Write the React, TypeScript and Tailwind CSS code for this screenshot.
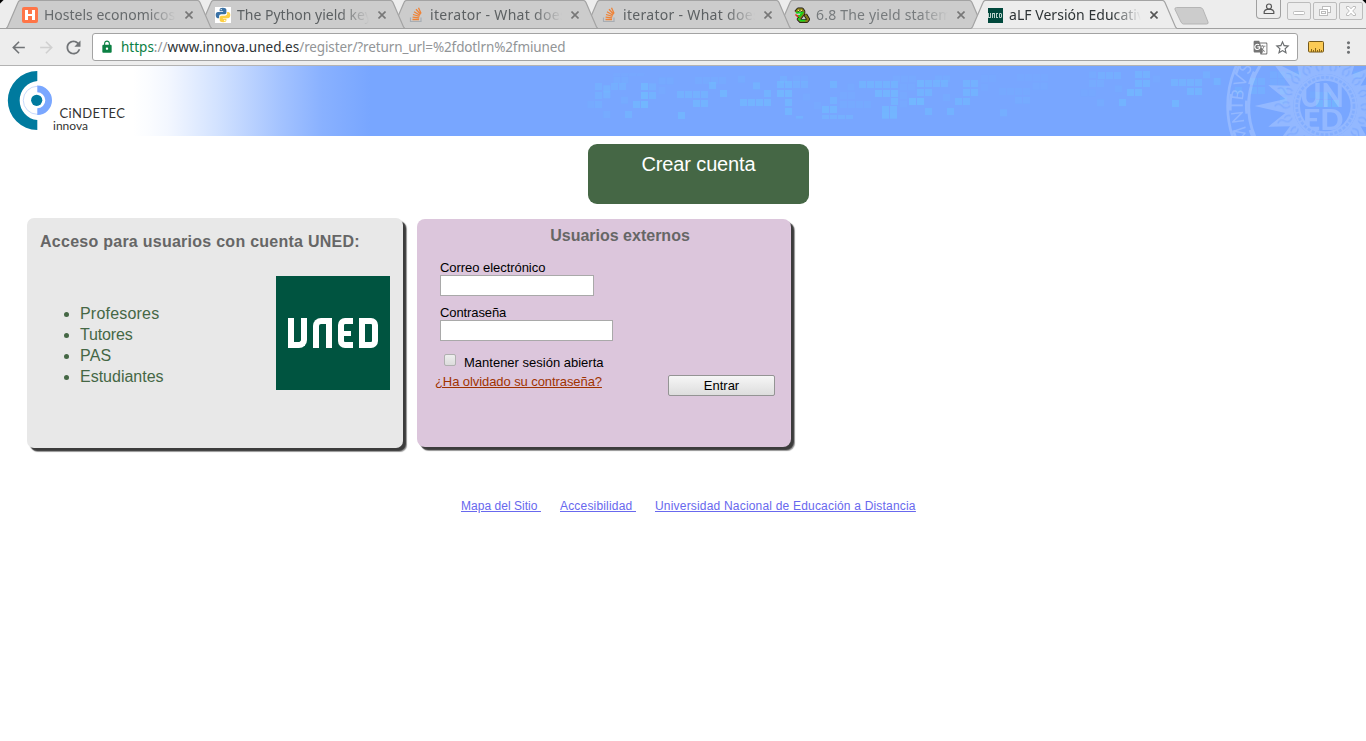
import type { ReactNode } from "react";
import { MdArrowBack, MdArrowForward, MdRefresh, MdLock, MdStarBorder, MdGTranslate, MdMoreVert } from "react-icons/md";

function HostelIcon() {
  return (
    <svg width="16" height="16" viewBox="0 0 16 16">
      <rect width="16" height="16" rx="2" fill="#ff7547" />
      <path d="M3 3h3v4h4V3h3v10h-3V9H6v4H3z" fill="#fff" />
    </svg>
  );
}

function PythonIcon() {
  return (
    <svg width="16" height="16" viewBox="0 0 16 16">
      <rect width="16" height="16" fill="#fff" />
      <path d="M7.8 .8C5.600 .8 4.600 1.500 4.600 2.800v1.500h3.500v.6H3C1.500 4.900 .7 6 .7 8s.9 3.200 2.100 3.200h1.300V9.500c0-1.300 1-2.200 2.200-2.200h3.400c1 0 1.700-.7 1.700-1.700V2.800C11.400 1.500 10 .8 7.800 .8z" fill="#3a72a5" />
      <path d="M8.200 15.300c2.200 0 3.200-.8 3.200-2v-1.500H7.900v-.6H13c1.500 0 2.300-1.100 2.300-3.100S14.400 4.900 13.200 4.900h-1.100v1.700c0 1.300-1 2.200-2.200 2.200H6.500c-1 0-1.800.7-1.800 1.700v2.800c0 1.200 1.300 2 3.500 2z" fill="#fdd045" />
      <circle cx="6.200" cy="2.600" r=".7" fill="#fff" />
      <circle cx="9.800" cy="13.500" r=".7" fill="#fff" />
    </svg>
  );
}

function StackIcon() {
  return (
    <svg width="16" height="16" viewBox="0 0 16 16" fill="none">
      <path d="M2.500 10.500v4h10.500v-4" stroke="#a8adb3" strokeWidth="1.200" />
      <path d="M4.500 12.500h6.500M4.600 10.200l6.600.6M5 7.500l6.500 1.900M6 4.700l6 3.500M8 2.200l4.600 5M10.500 .8l2.600 5.600" stroke="#ef8236" strokeWidth="1.300" />
    </svg>
  );
}

function SnakeIcon() {
  return (
    <svg width="17" height="17" viewBox="0 0 17 17" fill="none">
      <path d="M2 5l2.500-3h4L10 4v2.500L7.500 9.500 5 12.500l2 2h6.500L15 12.500 12 7.500" stroke="#111" strokeWidth="4" strokeLinejoin="round" />
      <path d="M2 5l2.500-3h4L10 4v2.500L7.500 9.500 5 12.500l2 2h6.500L15 12.500 12 7.500" stroke="#857b1c" strokeWidth="2.400" />
      <path d="M2 5.500h7L6.500 9H3M4.500 11.500L7 14h5" stroke="#19d419" strokeWidth="2" />
      <path d="M1.500 7.500l3 2.500" stroke="#e12b1c" strokeWidth="1.500" />
      <path d="M4 3h1.500M7 3h1.500" stroke="#fff36b" strokeWidth="1.200" />
    </svg>
  );
}

function UnedIcon() {
  return (
    <span className="flex h-[15px] w-[15px] items-center justify-center gap-px bg-[#00483c]">
      <i className="h-[5px] w-[3px] rounded-br-[1px] border border-t-0 border-[#b9d0ca]" />
      <i className="h-[5px] w-[3px] rounded-tl-[1px] border border-b-0 border-[#b9d0ca]" />
      <i className="h-[5px] w-[2px] border border-r-0 border-[#b9d0ca]" />
      <i className="h-[5px] w-[3px] rounded-r-[1px] border border-[#b9d0ca]" />
    </span>
  );
}

type TabProps = { icon: ReactNode; title: string; layer: string; spacing: string; tone: string; active?: boolean };

function Tab({ icon, title, layer, spacing, tone, active }: TabProps) {
  return (
    <div className={`relative -mr-[13px] h-[29px] w-[206px] shrink-0 ${layer}`}>
      <svg className="absolute inset-0" width="206" height="29" viewBox="0 0 206 29">
        <path
          d="M0 28.500L1.500 27 12 2.500Q12.800 .5 14.500 .5H191.500Q193 .5 194 2.500L204.500 27 206 28.500"
          fill={active ? "#ededed" : "#cccccc"}
          stroke="#a3a3a3"
          strokeWidth="1.200"
        />
        {!active && <path d="M0 28.500H206" stroke="#a0a0a0" />}
      </svg>
      <div className="relative flex h-[29px] items-center pt-[1px] pl-[16px]">
        <span className="flex w-4 justify-center">{icon}</span>
        <span className={`ml-[6px] w-[132px] overflow-hidden text-[14px] leading-5 whitespace-nowrap [mask-image:linear-gradient(to_right,#000_78%,transparent_100%)] ${spacing} ${tone}`}>
          {title}
        </span>
        <svg className="ml-[9px]" width="8" height="8" viewBox="0 0 8 8">
          <path d="M.5 .5l7 7M7.500 .5l-7 7" stroke={active ? "#555" : "#777"} strokeWidth="1.600" />
        </svg>
      </div>
    </div>
  );
}

function BrowserChrome() {
  return (
    <header className="h-[66px] border-b border-[#b3b3b3] bg-[#ededed] font-['Noto_Sans',sans-serif]">
      <div className="flex h-[29px] border-b border-[#a0a0a0] bg-[linear-gradient(135deg,#000_2px,transparent_3px),linear-gradient(225deg,#000_2px,transparent_3px)] pl-[6px]">
        <Tab icon={<HostelIcon />} title="Hostels economicos" layer="z-[5]" spacing="tracking-[0px]" tone="text-[#666a6c]" />
        <Tab icon={<PythonIcon />} title="The Python yield keyword" layer="z-[4]" spacing="tracking-[0px]" tone="text-[#5d6163]" />
        <Tab icon={<StackIcon />} title="iterator - What does" layer="z-[3]" spacing="tracking-[0.300px]" tone="text-[#5d6163]" />
        <Tab icon={<StackIcon />} title="iterator - What does" layer="z-[2]" spacing="tracking-[0.300px]" tone="text-[#5d6163]" />
        <Tab icon={<SnakeIcon />} title="6.8 The yield statement" layer="z-[1]" spacing="tracking-[0.200px]" tone="text-[#777b7d]" />
        <Tab icon={<UnedIcon />} title="aLF Versión Educativa" layer="z-[6]" spacing="tracking-[0.040px]" tone="text-[#2e3436]" active />
        <svg className="mt-[7px] ml-[10px]" width="36" height="18" viewBox="0 0 36 18">
          <path d="M2.500 .5H26q2 0 3 2l5 12.500q.7 2-1.500 2H9.500q-1.500 0-2.500-2L1 2.500Q.5 .5 2.500 .5z" fill="#cccccc" stroke="#b5b5b5" />
        </svg>
        <div className="ml-auto flex">
          <div className="flex h-[19px] w-[25px] items-center justify-center rounded-b-[4px] border border-t-0 border-[#a0a0a0]">
            <svg width="12" height="12" viewBox="0 0 12 12" fill="none" stroke="#555" strokeWidth="1.200">
              <circle cx="6" cy="3.500" r="2.500" />
              <path d="M1.200 10.500V8.600Q2 6.800 4 6.400h4q2 .4 2.800 2.200v1.900z" />
            </svg>
          </div>
          <div className="mt-[2px] ml-[6px] flex gap-[2px] pr-[3px]">
            <svg width="24" height="18" viewBox="0 0 24 18" fill="none" stroke="#bcbcbc">
              <rect x=".5" y=".5" width="23" height="17" rx="1.500" />
              <rect x="6.500" y="9.500" width="11" height="3" rx="1" fill="#fff" />
            </svg>
            <svg width="24" height="18" viewBox="0 0 24 18" fill="none" stroke="#bcbcbc">
              <rect x=".5" y=".5" width="23" height="17" rx="1.500" />
              <rect x="9.500" y="4.500" width="8" height="6" fill="#fff" />
              <rect x="6.500" y="7.500" width="8" height="6" fill="#fff" />
              <rect x="8.500" y="9.500" width="4" height="2" />
            </svg>
            <svg width="24" height="18" viewBox="0 0 24 18" fill="none" stroke="#bcbcbc">
              <rect x=".5" y=".5" width="23" height="17" rx="1.500" />
              <path d="M7.500 4.500h2.500l2 2.300 2-2.300h2.500v1.500L13.700 9l2.800 3v1.500H14l-2-2.300-2 2.300H7.500V12l2.800-3-2.800-3z" fill="#fff" />
            </svg>
          </div>
        </div>
      </div>
      <div className="flex h-[36px] items-center pl-[9px] text-[#5f6264]">
        <MdArrowBack size={19} className="text-[#717477]" />
        <MdArrowForward size={19} className="ml-[9px] text-[#d0d0d0]" />
        <MdRefresh size={21} className="ml-[7px] text-[#717477]" />
        <div className="ml-[8px] flex h-[28px] w-[1206px] items-center rounded-[3px] border border-[#a3a3a3] bg-white pr-[6px] pl-[7px]">
          <MdLock size={14} className="text-[#0b8043]" />
          <p className="ml-[7px] text-[13.500px] leading-5 whitespace-nowrap text-[#929597]">
            <span className="text-[#0b8043]">https</span>
            <span>://</span>
            <span className="tracking-[0.020px] text-[#2e3436]">www.innova.uned.es</span>
            <span className="tracking-[-0.120px]">/register/?return_url=%2fdotlrn%2fmiuned</span>
          </p>
          <MdGTranslate size={15} className="ml-auto text-[#757575]" />
          <MdStarBorder size={17} className="ml-[6px] text-[#6b6e70]" />
        </div>
        <svg className="ml-[10px]" width="16" height="14" viewBox="0 0 16 14">
          <rect x=".5" y="1.500" width="15" height="10.500" rx="1" fill="#fccb55" stroke="#75591a" />
          <path d="M3.500 12V9M5.500 12v-2M7.500 12V8M9.500 12v-2M11.500 12V9M13.500 12v-2" stroke="#8a6618" />
        </svg>
        <MdMoreVert size={19} className="ml-[15px] text-[#6f7274]" />
      </div>
    </header>
  );
}

// Mosaic tiles as [x, y, opacity, tile count to the right], in thirds of a pixel.
const tiles: number[][] = [
  [160, 34, 0.12, 4], [160, 44, 0.18, 2], [105, 63, 0.35, 1], [130, 70, 0.45, 1], [153, 63, 0.4, 2], [243, 63, 0.7, 1], [267, 64, 0.4, 1],
  [105, 90, 0.35, 1], [130, 88, 0.45, 1], [243, 90, 0.8, 1], [267, 90, 0.55, 1], [82, 117, 0.18, 1], [105, 117, 0.3, 1], [183, 104, 0.25, 1],
  [219, 117, 0.6, 1], [243, 117, 0.8, 1], [130, 147, 0.25, 1], [195, 147, 0.5, 1], [296, 46, 0.18, 2], [296, 75, 0.15, 1],
  [351, 87, 0.5, 4], [399, 114, 0.6, 2], [354, 150, 0.65, 1], [405, 45, 0.18, 4], [447, 60, 0.6, 1], [480, 84, 0.65, 1], [534, 41, 0.25, 1],
  [579, 61, 0.5, 1], [612, 84, 0.55, 1], [540, 111, 0.65, 4], [651, 57, 0.6, 2], [651, 84, 0.7, 2], [699, 57, 0.35, 2], [660, 42, 0.3, 1],
  [699, 41, 0.15, 2], [675, 111, 0.65, 1], [675, 138, 0.65, 1], [729, 95, 0.15, 1], [762, 120, 0.15, 1], [810, 57, 0.55, 1], [863, 64, 0.15, 1],
  [810, 105, 0.5, 1], [786, 132, 0.65, 2], [840, 90, 0.14, 2], [840, 117, 0.2, 4], [897, 57, 0.55, 5], [945, 84, 0.65, 3], [993, 108, 0.6, 1],
  [966, 132, 0.65, 2], [966, 152, 0.7, 2], [999, 40, 0.15, 3], [1020, 64, 0.15, 2], [1020, 90, 0.15, 1], [1020, 115, 0.15, 1],
  [1071, 54, 0.65, 1], [1095, 54, 0.5, 3], [1071, 81, 0.55, 2], [1047, 108, 0.8, 2], [1095, 138, 0.55, 1], [1161, 138, 0.55, 1], [1125, 40, 0.2, 2],
  [1149, 96, 0.2, 1], [1185, 108, 0.55, 2], [1209, 54, 0.5, 2], [1209, 81, 0.55, 2], [1263, 38, 0.12, 2], [1263, 65, 0.12, 1], [1320, 142, 0.4, 1],
  [1317, 78, 0.16, 4], [1365, 104, 0.25, 2], [1371, 36, 0.12, 4], [1418, 62, 0.14, 2], [1562, 82, 0.13, 2], [1587, 28, 0.2, 1],
  [1614, 30, 0.4, 3], [1587, 54, 0.25, 2], [1611, 112, 0.25, 1], [1665, 70, 0.2, 1], [1677, 111, 0.6, 1], [1725, 27, 0.5, 2], [1725, 54, 0.55, 2],
  [1701, 81, 0.65, 2], [1779, 40, 0.15, 1], [1833, 51, 0.5, 4], [1881, 78, 0.6, 2], [1836, 114, 0.65, 1], [1929, 28, 0.4, 1], [1961, 48, 0.5, 1],
  [2025, 75, 0.3, 1], [2070, 48, 0.35, 2], [2070, 75, 0.35, 2], [2130, 28, 0.25, 4], [2130, 50, 0.2, 2], [2160, 76, 0.35, 1], [2160, 105, 0.3, 1],
  [2250, 88, 0.2, 1], [2268, 90, 0.4, 2], [2268, 114, 0.6, 3], [2380, 28, 0.3, 1],
];

function starPoints() {
  const out: string[] = [];
  for (let i = 0; i < 36; i++) {
    const tip = i % 2 === 0;
    // The ray that points left (i = 18) is a long one.
    const r = tip ? (i % 4 === 0 ? 182 : 212) : 122;
    const a = (i * 10 * Math.PI) / 180;
    out.push(`${(r * Math.cos(a)).toFixed(1)},${(r * Math.sin(a)).toFixed(1)}`);
  }
  return out.join(" ");
}

function Banner() {
  return (
    <div className="relative h-[70px] overflow-hidden bg-[linear-gradient(to_right,#fff_133px,#fafcff_150px,#f3f7ff_168px,#e8f0ff_185px,#d2e2ff_218px,#bcd3ff_248px,#a4c3ff_280px,#89b1ff_322px,#78a6ff_370px)]">
      <svg className="absolute inset-0" width="1366" height="70" viewBox="0 0 1366 70">
        <g transform="translate(560 -4) scale(.333333)">
          {tiles.flatMap(([x, y, o, n], i) =>
            Array.from({ length: n }, (_, k) => (
              <rect key={`${i}-${k}`} x={x + k * 24} y={y} width="21" height={y === 34 ? 8 : y === 152 ? 18 : 21} fill="#70bcff" opacity={o} />
            )),
          )}
          {[786, 810, 834, 858].map((x) => (
            <rect key={x} x={x} y="159" width="21" height="12" fill="#70bcff" opacity=".45" />
          ))}
          <rect x="708" y="162" width="21" height="8" fill="#70bcff" opacity=".5" />
        </g>
        <g transform="translate(1325.300 40) scale(.333333)" opacity=".2" fill="none" stroke="#fff">
          <path fill="#fff" stroke="none" fillRule="evenodd" d="M-96 0a96 96 0 1 0 192 0a96 96 0 1 0-192 0z M-76 0a76 76 0 1 1 152 0a76 76 0 1 1-152 0z" />
          <mask id="disc">
            <rect x="-300" y="-300" width="600" height="600" fill="#fff" stroke="none" />
            <circle r="96" fill="#000" stroke="none" />
          </mask>
          <polygon points={starPoints()} fill="#fff" stroke="none" mask="url(#disc)" />
          <circle r="293" strokeWidth="8" />
          <circle r="285" strokeWidth="8" strokeDasharray="50 60" />
          <circle r="230" strokeWidth="9" />
          <circle r="237" strokeWidth="8" strokeDasharray="40 50" />
          <path id="motto" d="M-214 124A247 247 0 0 1 -100 -226" stroke="none" />
          <text fill="#fff" stroke="none" fontFamily="Lato, sans-serif" fontSize="50" fontWeight="400">
            <textPath href="#motto" startOffset="26" textLength="226">MNIBVS</textPath>
          </text>
          <g fill="#fff" stroke="none" fontFamily="Lato, sans-serif" fontWeight="900">
            <text x="-76" y="3" fontSize="94" textLength="132" lengthAdjust="spacingAndGlyphs">UN</text>
            <text x="-68" y="72" fontSize="88" textLength="122" lengthAdjust="spacingAndGlyphs">ED</text>
          </g>
        </g>
        <g transform="translate(560 -4) scale(.333333)">
          <circle cx="2296" cy="132" r="86" fill="none" stroke="#78a6ff" strokeWidth="8" strokeDasharray="9 5" opacity=".6" />
          <g fill="none" stroke="#78a6ff" strokeWidth="4" opacity=".7">
            {Array.from({ length: 18 }, (_, i) => (
              <path key={i} transform={`translate(2296 132) rotate(${i * 20})`} d="M106 0q14-12 24 0t22 0M108 8q10 8 20 0" />
            ))}
          </g>
        </g>
      </svg>
      <svg className="relative block" width="140" height="70" viewBox="0 0 140 70">
        <path d="M37.300 5A29.300 29.300 0 0 0 37.300 64V54A19.600 19.600 0 0 1 37.300 15z" fill="#007a9e" />
        <circle cx="37.300" cy="34.300" r="14" fill="none" stroke="#c9dafc" strokeWidth="1" />
        <path d="M37.300 19.600a14.700 14.700 0 0 1 0 29.400v-6.700a8 8 0 0 0 0-16z" fill="#7aa7ff" />
        <circle cx="36.700" cy="34.300" r="5.600" fill="#007a9e" />
        <text x="59.500" y="52" fontFamily="Lato, sans-serif" fontSize="13" fill="#333" textLength="65.500">CiNDETEC</text>
        <text x="53" y="64" fontFamily="Lato, sans-serif" fontSize="12" fill="#333" textLength="35">innova</text>
      </svg>
    </div>
  );
}

function UnedLogo() {
  return (
    <div className="flex h-[114px] w-[114px] items-center justify-center gap-[6px] bg-[#005440]">
      <i className="h-[30px] w-[19px] rounded-br-[8px] border-[6px] border-t-0 border-white" />
      <i className="h-[30px] w-[19px] rounded-tl-[8px] border-[6px] border-b-0 border-white" />
      <i className="flex h-[30px] w-[15px] items-center rounded-l-[7px] border-[6px] border-r-0 border-white">
        <i className="h-[5px] w-[7px] bg-white" />
      </i>
      <i className="h-[30px] w-[19px] rounded-r-[7px] border-[6px] border-white" />
    </div>
  );
}

export default function App() {
  return (
    <div className="h-[741px] w-[1366px] overflow-hidden bg-white font-['Liberation_Sans',Arial,sans-serif] text-black">
      <BrowserChrome />
      <Banner />
      <main>
        <div className="mt-2 ml-[588px] h-[60px] w-[221px] rounded-[9px] bg-[#456745] pt-[6px] text-center text-[20px] leading-7 tracking-[-0.130px] text-white">
          Crear cuenta
        </div>
        <div className="mt-[14px] flex items-start pl-[27px]">
          <section className="h-[230px] w-[376px] rounded-[7px] bg-[#e8e8e8] pt-[14px] pl-[13px] shadow-[3px_3px_1px_#3c3c3c,4px_4px_1px_#a0a0a0]">
            <h2 className="text-[16px] leading-5 font-bold tracking-[0.260px] text-[#666]">Acceso para usuarios con cuenta UNED:</h2>
            <div className="mt-[24px] flex justify-between pr-[13px]">
              <ul className="mt-[27px] list-disc pl-[40px] text-[16px] leading-[21px] tracking-[0.200px] text-[#456745]">
                <li>Profesores</li>
                <li className="tracking-[-0.150px]">Tutores</li>
                <li>PAS</li>
                <li className="tracking-[0px]">Estudiantes</li>
              </ul>
              <UnedLogo />
            </div>
          </section>
          <section className="mt-px ml-[14px] h-[228px] w-[374px] rounded-[8px] bg-[#dcc6dc] pt-[7px] pl-[18px] text-[13px] leading-[15px] shadow-[3px_3px_1px_#3c3c3c,4px_4px_1px_#a0a0a0]">
            <h2 className="pl-[14px] text-center text-[16px] leading-5 font-bold text-[#666]">Usuarios externos</h2>
            <div className="mt-[14px] flex flex-col items-start pl-[5px]">
              <label className="tracking-[-0.050px]">Correo electrónico</label>
              <input className="h-[21px] w-[154px] border border-[#a9a9a9] bg-white" />
              <label className="mt-[9px] tracking-[-0.100px]">Contraseña</label>
              <input type="password" className="h-[21px] w-[173px] border border-[#a9a9a9] bg-white" />
              <label className="mt-[13px] flex items-start">
                <span className="ml-[4px] h-[12px] w-[12px] rounded-[2px] border border-[#b0b0b0] bg-linear-to-b from-[#eeeeee] to-[#dcdcdc]" />
                <span className="ml-[8px] pt-[1px]">Mantener sesión abierta</span>
              </label>
            </div>
            <div className="flex items-start justify-between pt-[3px] pr-[16px]">
              <a className="mt-px tracking-[-0.080px] text-[#a03300] underline">¿Ha olvidado su contraseña?</a>
              <button className="mt-[2px] h-[21px] w-[107px] rounded-[2px] border border-[#949494] bg-linear-to-b from-[#f6f6f6] to-[#dddddd] leading-[19px]">Entrar</button>
            </div>
          </section>
        </div>
        <footer className="mt-[50px] flex pl-[461px] text-[12px] leading-4 whitespace-pre text-[#6868ee] underline">
          <a className="w-[80px] tracking-[0.030px]">{"Mapa del Sitio "}</a>
          <a className="ml-[19px] w-[76px] tracking-[0.180px]">{"Accesibilidad "}</a>
          <a className="ml-[19px] tracking-[0.190px]">Universidad Nacional de Educación a Distancia</a>
        </footer>
      </main>
    </div>
  );
}
